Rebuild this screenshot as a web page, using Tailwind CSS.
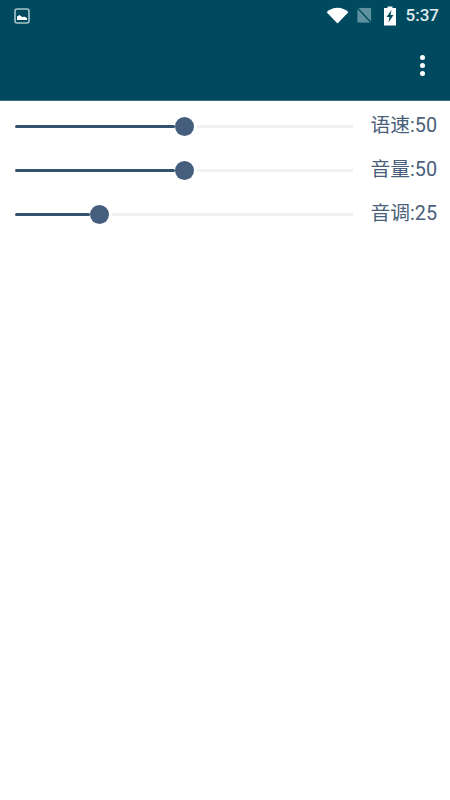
<!DOCTYPE html>
<html lang="zh-CN">
<head>
    <meta charset="UTF-8">
    <meta name="viewport" content="width=device-width, initial-scale=1.0">
    <title>语音设置</title>
    <script src="https://cdn.jsdelivr.net/npm/@tailwindcss/browser@4"></script>
</head>
<body class="bg-white h-screen overflow-hidden font-['Roboto','Noto_Sans_CJK_SC',sans-serif]">

    <!-- Status bar + toolbar -->
    <header class="h-[101px] bg-[#004a5f] flex flex-col border-b border-[#33707f]">
        <div class="h-[31px] flex items-center pl-[14px] pr-[11px]">
            <!-- picture notification -->
            <svg viewBox="0 0 16 16" class="w-[16px] h-[16px]">
                <rect x="1" y="1" width="14" height="14" rx="2" fill="none" stroke="#a9c6ce" stroke-width="1.6"/>
                <path d="M3 12V8.500l2.500-1.500 3 2.200 1.500-.7 3 1.500V12Z" fill="#ffffff"/>
            </svg>
            <div class="ml-auto flex items-center">
                <!-- wifi -->
                <svg viewBox="0 0 24 18" class="w-[23px] h-[17px]">
                    <path d="M12 17.500 0.500 5.500C3.500 2.500 7.500 0.800 12 0.800s8.500 1.700 11.500 4.700Z" fill="#ffffff"/>
                </svg>
                <!-- no sim -->
                <svg viewBox="0 0 18 18" class="w-[17px] h-[17px] ml-[7px]">
                    <path d="M1.500 1H16V16.500H1.500Z" fill="#5f929f"/>
                    <path d="M0.500 0 17.500 18" stroke="#004a5f" stroke-width="1.600"/>
                </svg>
                <!-- battery charging -->
                <svg viewBox="0 0 14 20" class="w-[14px] h-[20px] ml-[10px]">
                    <path d="M4.500 0.500h5V2H13V19.500H1V2H4.500Z" fill="#ffffff"/>
                    <path d="M8.500 4 3.500 11h3L5.500 16.500 10.500 9H7.500Z" fill="#004a5f"/>
                </svg>
                <span class="ml-[9px] text-[17px] leading-none font-medium text-[#dfeaed]">5:37</span>
            </div>
        </div>
        <div class="flex-1 flex items-center justify-end pr-[25px]">
            <!-- overflow menu -->
            <div class="flex flex-col gap-[3px]">
                <span class="w-[5px] h-[5px] rounded-full bg-white"></span>
                <span class="w-[5px] h-[5px] rounded-full bg-white"></span>
                <span class="w-[5px] h-[5px] rounded-full bg-white"></span>
            </div>
        </div>
    </header>

    <!-- Sliders -->
    <main class="pt-[3px] pl-[15px] pr-[13px] flex flex-col text-[#4a5f7a]">
        <div class="h-[44px] flex items-center">
            <div class="w-[338px] flex items-center">
                <div class="w-[160px] h-[3px] rounded-full bg-[#34506f]"></div>
                <div class="w-[19px] h-[19px] rounded-full bg-[#455e7e] shrink-0"></div>
                <div class="flex-1 h-[3px] ml-[3px] bg-[#eef0f1]"></div>
            </div>
            <span class="ml-auto text-[19.800px]">语速:50</span>
        </div>
        <div class="h-[44px] flex items-center">
            <div class="w-[338px] flex items-center">
                <div class="w-[160px] h-[3px] rounded-full bg-[#34506f]"></div>
                <div class="w-[19px] h-[19px] rounded-full bg-[#455e7e] shrink-0"></div>
                <div class="flex-1 h-[3px] ml-[3px] bg-[#eef0f1]"></div>
            </div>
            <span class="ml-auto text-[19.800px]">音量:50</span>
        </div>
        <div class="h-[44px] flex items-center">
            <div class="w-[338px] flex items-center">
                <div class="w-[75px] h-[3px] rounded-full bg-[#34506f]"></div>
                <div class="w-[19px] h-[19px] rounded-full bg-[#455e7e] shrink-0"></div>
                <div class="flex-1 h-[3px] ml-[3px] bg-[#eef0f1]"></div>
            </div>
            <span class="ml-auto text-[19.800px]">音调:25</span>
        </div>
    </main>

</body>
</html>
